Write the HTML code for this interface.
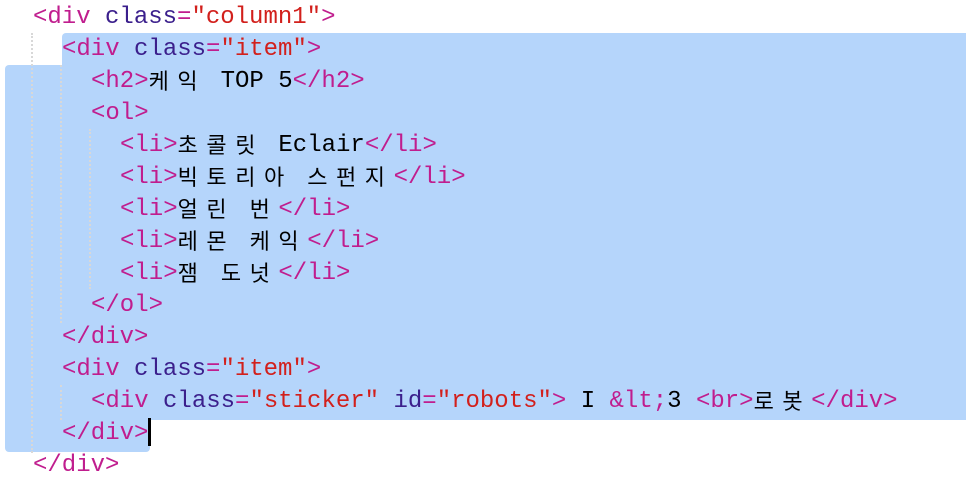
<!DOCTYPE html>
<html><head><meta charset="utf-8"><style>
body{margin:0;width:966px;height:488px;background:#fff;position:relative;overflow:hidden;font-family:"Liberation Mono","Noto Sans CJK KR",monospace;font-size:24px;}
.sel{position:absolute;background:#b5d5fb;}
.g{position:absolute;width:0;border-left:2px dotted #d8d8d8;}
.l{position:absolute;height:32px;line-height:32px;white-space:pre;color:#000;}
.t{color:#c01d8e}.a{color:#3b1f8c}.s{color:#d2201c}
.k{display:inline-block;width:28.8px;height:32px;line-height:29px;vertical-align:top;font-family:"Noto Sans CJK KR",sans-serif;font-size:22px;}
</style></head><body>
<div class="sel" style="left:62px;top:33px;width:904px;height:33px;border-radius:4px 0 0 0"></div>
<div class="sel" style="left:5px;top:65px;width:961px;height:355px;border-radius:4px 0 0 0"></div>
<div class="sel" style="left:5px;top:419px;width:145px;height:33px;border-radius:0 0 4px 4px"></div>
<div class="g" style="left:31px;top:33px;height:420px"></div>
<div class="g" style="left:60px;top:65px;height:258px"></div>
<div class="g" style="left:60px;top:385px;height:35px"></div>
<div class="g" style="left:89px;top:129px;height:160px"></div>
<div style="position:absolute;left:148px;top:418px;width:3px;height:28px;background:#000"></div>

<div class="l" style="left:33px;top:2px"><span class="t">&lt;div</span> <span class="a">class</span><span class="t">=</span><span class="s">"column1"</span><span class="t">&gt;</span></div>
<div class="l" style="left:62px;top:34px"><span class="t">&lt;div</span> <span class="a">class</span><span class="t">=</span><span class="s">"item"</span><span class="t">&gt;</span></div>
<div class="l" style="left:91px;top:66px"><span class="t">&lt;h2&gt;</span><span class="k">케</span><span class="k">익</span> TOP 5<span class="t">&lt;/h2&gt;</span></div>
<div class="l" style="left:91px;top:98px"><span class="t">&lt;ol&gt;</span></div>
<div class="l" style="left:120px;top:130px"><span class="t">&lt;li&gt;</span><span class="k">초</span><span class="k">콜</span><span class="k">릿</span> Eclair<span class="t">&lt;/li&gt;</span></div>
<div class="l" style="left:120px;top:162px"><span class="t">&lt;li&gt;</span><span class="k">빅</span><span class="k">토</span><span class="k">리</span><span class="k">아</span> <span class="k">스</span><span class="k">펀</span><span class="k">지</span><span class="t">&lt;/li&gt;</span></div>
<div class="l" style="left:120px;top:194px"><span class="t">&lt;li&gt;</span><span class="k">얼</span><span class="k">린</span> <span class="k">번</span><span class="t">&lt;/li&gt;</span></div>
<div class="l" style="left:120px;top:226px"><span class="t">&lt;li&gt;</span><span class="k">레</span><span class="k">몬</span> <span class="k">케</span><span class="k">익</span><span class="t">&lt;/li&gt;</span></div>
<div class="l" style="left:120px;top:258px"><span class="t">&lt;li&gt;</span><span class="k">잼</span> <span class="k">도</span><span class="k">넛</span><span class="t">&lt;/li&gt;</span></div>
<div class="l" style="left:91px;top:290px"><span class="t">&lt;/ol&gt;</span></div>
<div class="l" style="left:62px;top:322px"><span class="t">&lt;/div&gt;</span></div>
<div class="l" style="left:62px;top:354px"><span class="t">&lt;div</span> <span class="a">class</span><span class="t">=</span><span class="s">"item"</span><span class="t">&gt;</span></div>
<div class="l" style="left:91px;top:386px"><span class="t">&lt;div</span> <span class="a">class</span><span class="t">=</span><span class="s">"sticker"</span> <span class="a">id</span><span class="t">=</span><span class="s">"robots"</span><span class="t">&gt;</span> I <span class="t">&amp;lt;</span>3 <span class="t">&lt;br&gt;</span><span class="k">로</span><span class="k">봇</span><span class="t">&lt;/div&gt;</span></div>
<div class="l" style="left:62px;top:418px"><span class="t">&lt;/div&gt;</span></div>
<div class="l" style="left:33px;top:450px"><span class="t">&lt;/div&gt;</span></div>
</body></html>
